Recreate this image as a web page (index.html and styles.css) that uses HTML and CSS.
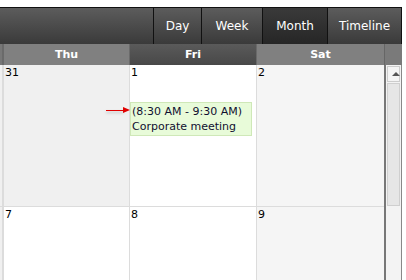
FILE: index.html
```html
<!DOCTYPE html>
<html lang="en-US">
  <head>
    <title>Scheduler - Month</title>
    <link rel="stylesheet" href="styles.css">
  </head>
  <body>
    <div class="scheduler">
      <div class="toolbar">
        <button class="view">Day</button>
        <button class="view">Week</button>
        <button class="view selected">Month</button>
        <button class="view">Timeline</button>
      </div>
      <div class="main">
        <div class="grid">
          <div class="hd edge"></div>
          <div class="hd">Thu</div>
          <div class="hd today">Fri</div>
          <div class="hd">Sat</div>

          <div class="cell edge"></div>
          <div class="cell other">31</div>
          <div class="cell">1
            <div class="event">
              <span class="pointer"></span>
              (8:30 AM - 9:30 AM)<br>Corporate meeting
            </div>
          </div>
          <div class="cell weekend">2</div>

          <div class="cell edge"></div>
          <div class="cell">7</div>
          <div class="cell">8</div>
          <div class="cell weekend">9</div>
        </div>
        <div class="scroll">
          <div class="scroll-hd"></div>
          <div class="scroll-bar">
            <div class="arrow"></div>
            <div class="thumb"></div>
          </div>
        </div>
      </div>
    </div>
  </body>
</html>
```
FILE: styles.css
```css
body {
  margin: 0;
  background: #fff;
  font-family: "DejaVu Sans", Verdana, sans-serif;
  font-size: 11px;
}
.scheduler {
  padding-top: 7px;
  width: 402px;
}
.toolbar {
  display: flex;
  justify-content: flex-end;
  height: 36px;
  border-top: 1px solid #111;
  background: linear-gradient(#5c5c5c, #3a3a3a);
}
.view {
  border: none;
  border-left: 1px solid #111;
  background: transparent;
  color: #fff;
  font-family: inherit;
  font-size: 12px;
  padding: 0;
  height: 36px;
}
.view:nth-child(1) { width: 48px; }
.view:nth-child(2) { width: 61px; }
.view:nth-child(3) { width: 65px; }
.view:nth-child(4) { width: 75px; border-right: 1px solid #111; }
.view.selected {
  background: linear-gradient(#3a3a3a, #262626);
}

.main {
  display: flex;
}
.grid {
  display: grid;
  grid-template-columns: 3px 126px 127px 128px;
  grid-template-rows: 21px 142px 80px;
}
.hd {
  background: #808080;
  border-left: 1px solid #6a6a6a;
  color: #fff;
  font-weight: bold;
  text-align: center;
  line-height: 21px;
}
.hd.edge {
  background: #777;
  border-left: none;
  border-right: 1px solid #6a6a6a;
}
.hd.today {
  background: linear-gradient(#5a5a5a, #484848);
}
.cell {
  border-left: 1px solid #dcdcdc;
  border-bottom: 1px solid #dcdcdc;
  background: #fff;
  color: #000;
  padding: 1px 0 0 1px;
  position: relative;
}
.cell.edge {
  border-left: none;
  border-right: 1px solid #dcdcdc;
  background: #f0f0f0;
  padding: 0;
}
.cell.other { background: #f0f0f0; }
.cell.weekend { background: #f5f5f5; }

.event {
  position: absolute;
  left: 0;
  top: 37px;
  width: 119px;
  height: 31px;
  border: 1px solid #cfe8b8;
  background: #e8fbd9;
  color: #101030;
  padding: 1px 0 0 1px;
  line-height: 15px;
  white-space: nowrap;
}
.pointer {
  position: absolute;
  left: -25px;
  top: 7px;
  width: 18px;
  height: 1px;
  background: #e00000;
  box-shadow: 0 2px 3px rgba(0,0,0,0.25);
}
.pointer::after {
  content: "";
  position: absolute;
  right: -6px;
  top: -3px;
  border-left: 7px solid #e00000;
  border-top: 3.5px solid transparent;
  border-bottom: 3.5px solid transparent;
}

.scroll {
  width: 18px;
  display: flex;
  flex-direction: column;
}
.scroll-hd {
  height: 21px;
  background: #7a7a7a;
  border-left: 1px solid #666;
  box-sizing: border-box;
}
.scroll-bar {
  flex: 1;
  background: #f3f3f3;
  border-left: 2px solid #777;
  border-right: 1px solid #888;
  padding: 1px 1px 0 1px;
}
.arrow {
  height: 14px;
  background: #f4f4f4;
  border: 1px solid #ccc;
  position: relative;
}
.arrow::after {
  content: "";
  position: absolute;
  left: 4px;
  top: 5px;
  border-bottom: 4px solid #555;
  border-left: 4px solid transparent;
  border-right: 4px solid transparent;
}
.thumb {
  height: 121px;
  margin-top: 1px;
  background: #e6e6e6;
  border: 1px solid #cfcfcf;
}
```
